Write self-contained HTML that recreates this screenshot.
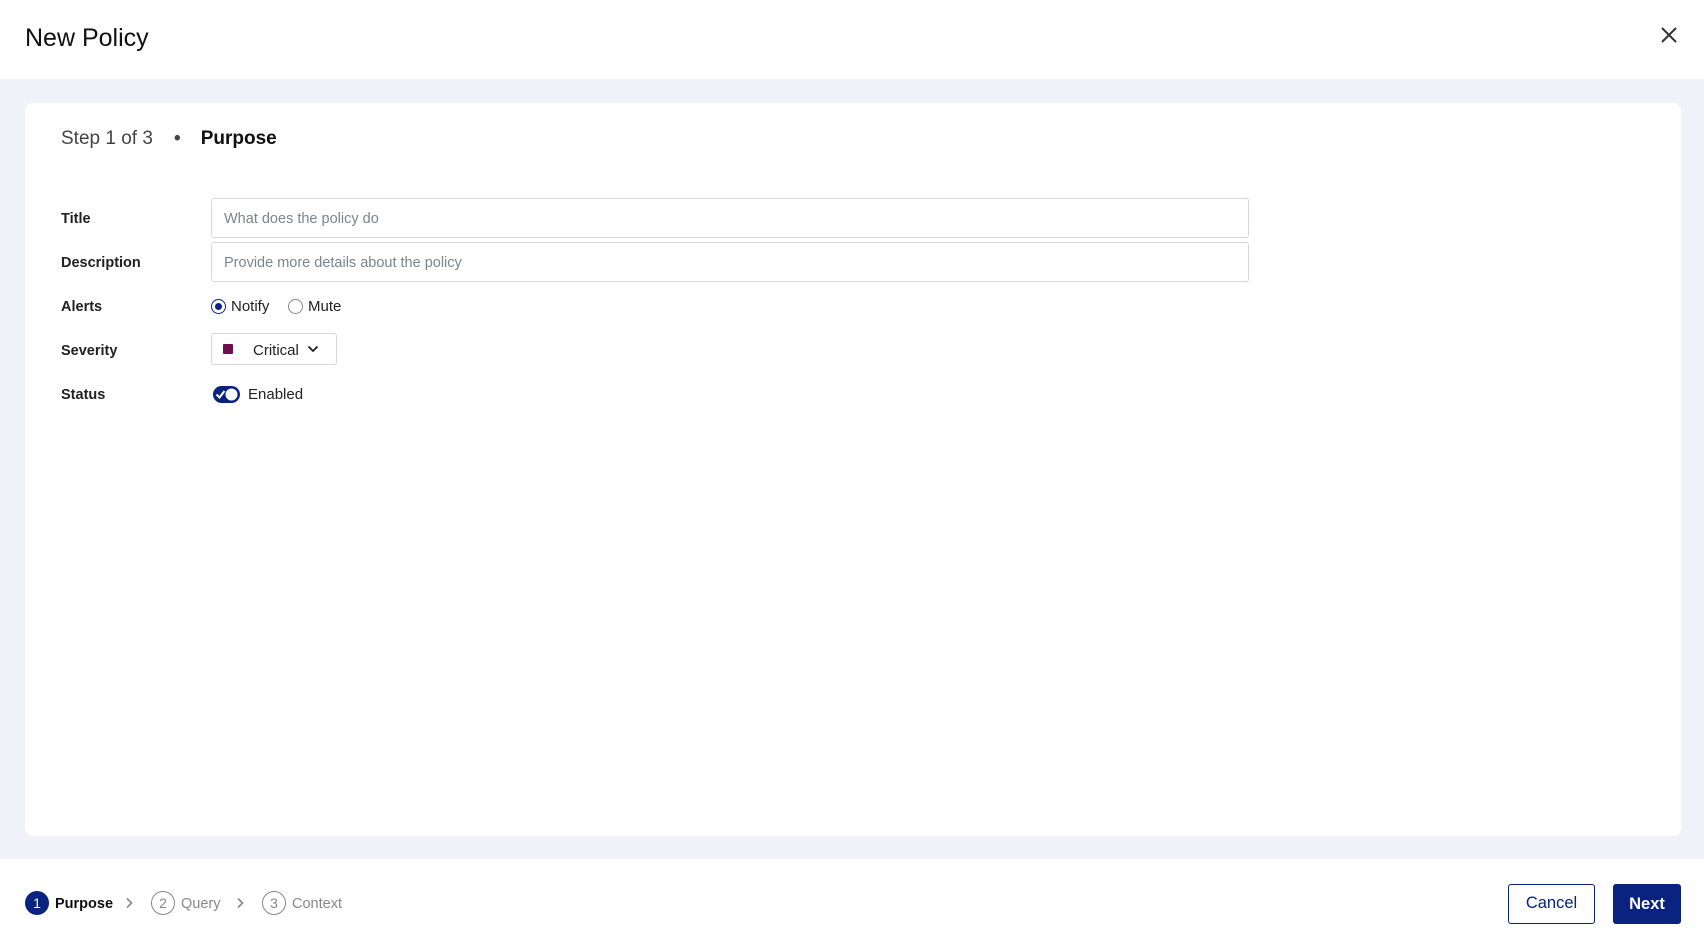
<!DOCTYPE html>
<html><head><style>
*{box-sizing:border-box;margin:0;padding:0}
body{width:1704px;height:948px;background:#fff;font-family:"Liberation Sans",sans-serif;color:#1a1a1a;position:relative;overflow:hidden}
.hdr{position:absolute;left:0;top:0;width:1704px;height:79px;background:#fff;box-shadow:0 1px 3px rgba(0,0,0,.06)}
.hdr h1{position:absolute;left:25px;top:24px;font-size:25px;font-weight:normal;color:#111}
.bg{position:absolute;left:0;top:79px;width:1704px;height:780px;background:#eff3f8}
.card{position:absolute;left:25px;top:103px;width:1656px;height:733px;background:#fff;border-radius:8px}
.step{position:absolute;left:61px;top:128px;font-size:19px;color:#444;font-weight:bold}
.step b{color:#111;margin-left:20px}
.lbl{position:absolute;left:61px;font-size:14.5px;font-weight:bold;color:#222}
.inp{position:absolute;left:211px;width:1038px;height:40px;border:1px solid #d4d7db;border-radius:3px;font-size:14.5px;color:#7b858f;padding:12px 12px}
.radio{position:absolute;width:15px;height:15px;border-radius:50%;border:1px solid #888}
.t{position:absolute;font-size:15px;color:#222}
.foot{position:absolute;left:0;top:859px;width:1704px;height:89px;background:#fff}
.btn{position:absolute;top:884px;height:40px;border-radius:3px;font-size:16.5px;text-align:center;line-height:40px}
.circ{position:absolute;top:891px;width:24px;height:24px;border-radius:50%;border:1px solid #888;color:#888;font-size:14px;text-align:center;line-height:22px}
.fs{position:absolute;top:896px;font-size:14.5px;color:#888}
</style></head><body>
<div class="hdr"><h1>New Policy</h1>
<svg style="position:absolute;left:1661px;top:27px" width="16" height="16" viewBox="0 0 16 16"><path d="M1 1L15 15M15 1L1 15" stroke="#333" stroke-width="2"/></svg></div>
<div class="bg"></div>
<div class="card"></div>
<div class="step"><span style="font-weight:normal">Step 1 of 3</span> &nbsp;&nbsp;&nbsp;•<b>Purpose</b></div>
<div class="lbl" style="top:211px">Title</div>
<div class="lbl" style="top:255px">Description</div>
<div class="lbl" style="top:299px">Alerts</div>
<div class="lbl" style="top:343px">Severity</div>
<div class="lbl" style="top:387px">Status</div>
<div class="inp" style="top:198px">What does the policy do</div>
<div class="inp" style="top:242px">Provide more details about the policy</div>
<div class="radio" style="left:211px;top:299px;border:1.5px solid #0a2280"><div style="width:7px;height:7px;border-radius:50%;background:#0a2280;margin:2.5px"></div></div>
<div class="t" style="left:231px;top:298px">Notify</div>
<div class="radio" style="left:288px;top:299px"></div>
<div class="t" style="left:308px;top:298px">Mute</div>
<div style="position:absolute;left:211px;top:333px;width:126px;height:32px;border:1px solid #d4d7db;border-radius:3px"></div>
<div style="position:absolute;left:223px;top:344px;width:10px;height:10px;background:#6d0f4e;border-radius:1px"></div>
<div class="t" style="left:253px;top:342px">Critical</div>
<svg style="position:absolute;left:307px;top:344px" width="12" height="10" viewBox="0 0 12 10"><path d="M1.5 2.5L6 7L10.5 2.5" stroke="#222" stroke-width="1.8" fill="none"/></svg>
<svg style="position:absolute;left:212px;top:385px" width="29" height="20" viewBox="0 0 29 20"><rect x="1" y="1" width="27" height="17" rx="8.5" fill="#0a2280"/><circle cx="19.5" cy="9.5" r="6" fill="#fff"/><path d="M4.5 9.5L7.5 12.5L12.5 6" stroke="#fff" stroke-width="2" fill="none"/></svg>
<div class="t" style="left:248px;top:386px">Enabled</div>
<div class="foot"></div>
<div class="circ" style="left:25px;background:#0a2280;border-color:#0a2280;color:#fff">1</div>
<div class="fs" style="left:55px;color:#111;font-weight:bold">Purpose</div>
<svg style="position:absolute;left:124px;top:897px" width="10" height="12" viewBox="0 0 10 12"><path d="M3 1.5L7.5 6L3 10.5" stroke="#888" stroke-width="1.6" fill="none"/></svg>
<div class="circ" style="left:151px">2</div>
<div class="fs" style="left:181px">Query</div>
<svg style="position:absolute;left:235px;top:897px" width="10" height="12" viewBox="0 0 10 12"><path d="M3 1.5L7.5 6L3 10.5" stroke="#888" stroke-width="1.6" fill="none"/></svg>
<div class="circ" style="left:262px">3</div>
<div class="fs" style="left:292px">Context</div>
<div class="btn" style="left:1508px;width:87px;border:1.5px solid #0a2280;color:#0a2280;line-height:37px">Cancel</div>
<div class="btn" style="left:1613px;width:68px;background:#0a2280;color:#fff;font-weight:bold">Next</div>
</body></html>
